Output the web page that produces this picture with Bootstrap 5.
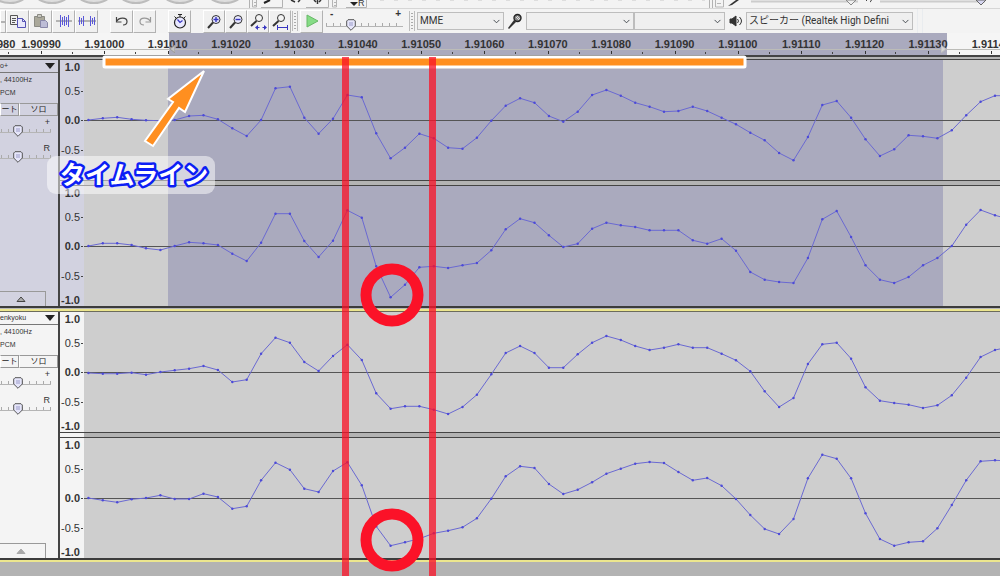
<!DOCTYPE html>
<html lang="ja">
<head>
<meta charset="utf-8">
<meta name="viewport" content="width=device-width, initial-scale=1">
<title>Audio editor</title>
<link href="https://cdn.jsdelivr.net/npm/bootstrap@5.3.0/dist/css/bootstrap.min.css" rel="stylesheet">
<style>
  :root { --sel: #aaaabe; --face: #f3f3f3; --picked: #d2d2e0; }
  body { background: #b3b3b3; color: #333; font-family: "Liberation Sans", "Noto Sans CJK JP", sans-serif; font-size: 11px; line-height: 12px; overflow: hidden; min-height: 100vh; }
  svg { display: block; }
  .top-strip { height: 8px; background: var(--face); }
  .tool-strip { height: 25px; background: var(--face); border-top: 1px solid #d6d6d6; }
  .tool { width: 23px; height: 23px; padding: 0; border: 1px solid; border-color: #fff #b2b2b2 #b2b2b2 #fff; border-radius: 0; background: #f0f0f0; display: flex; align-items: center; justify-content: center; flex: none; }
  .tool-cut { width: 6px; }
  .tool-zoom { width: 22px; }
  .grip { width: 6px; height: 20px; margin: 0 2px 0 1px; flex: none; border: 1px solid #bdbdbd; border-width: 0 1px; background: repeating-linear-gradient(#f3f3f3 0 2px, #aaa 2px 3px); background-clip: content-box; padding: 0 1px; }
  .device { height: 18px; border: 1px solid #bdbdbd; border-radius: 0; padding: 0 14px 0 2px; background-color: #efefef; background-size: 9px 7px; background-position: right 2px center; font: 10px/16px Roboto, "Noto Sans CJK JP", sans-serif; color: #333; flex: none; }
  .device-host { width: 87px; }
  .device-in { width: 108px; }
  .device-channel { width: 91px; }
  .device-out { width: 167px; }
  input[type=range] { appearance: none; -webkit-appearance: none; height: 14px; margin: 0; padding: 0; background: linear-gradient(#b5b5b5, #b5b5b5) 0 8px / 100% 1px no-repeat, repeating-linear-gradient(90deg, #aaa 0 1px, transparent 1px 7px) 0 5px / 100% 3px no-repeat; }
  input[type=range]::-webkit-slider-thumb { -webkit-appearance: none; width: 10px; height: 12px; background: url("data:image/svg+xml,%3Csvg xmlns='http://www.w3.org/2000/svg' viewBox='0 0 10 12'%3E%3Cpath d='M2 .7h6L9.3 2v5L5 11.3.7 7V2z' fill='%23e6e6fa' stroke='%23555'/%3E%3Cpath d='M3 4h4M3 6h4' stroke='%239a9ac8'/%3E%3C/svg%3E") center / 10px 12px no-repeat; }
  .gain { width: 82px; padding-left: 3px; }
  .gain input { width: 77px; }
  .sign { font-size: 10px; line-height: 8px; font-weight: bold; }

  .timeline { height: 22px; background: #f5f5f5; overflow: hidden; }
  .timeline .picked { position: absolute; left: 16.9%; right: 5.3%; top: 0; bottom: 0; background: var(--sel); }
  .marks { margin: 0 -23px 0 -54px; display: grid; grid-template-columns: repeat(17, 1fr); position: relative; height: 22px; padding-top: 5px; }
  .marks span { text-align: center; font-weight: bold; height: 16px; position: relative; }
  .marks span:first-child { text-align: right; margin-right: -6px; }
  .marks span::before { content: ""; position: absolute; left: 50%; bottom: 0; width: 1px; height: 3px; background: #333; }
  .marks span::after { content: ""; position: absolute; right: 0; bottom: 0; width: 1px; height: 2px; background: #444; }
  .marks span:first-child::after { right: 6px; }
  .baseline { position: absolute; left: 0; right: 0; top: 16px; height: 1px; background: #bcbcb8; }
  .edge { position: absolute; top: 12px; }
  .edge-start { left: 17%; }
  .edge-end { right: 5.4%; }
  .divider { height: 5px; border: solid #444; border-width: 2px 0 1px; background: #b5b5b5; }

  .track-panel { width: 60px; border-right: 2px solid #444; flex: none; overflow: hidden; background: var(--track); }
  .is-picked { --track: var(--picked); }
  .is-plain { --track: #f4f4f4; }
  .track-name { height: 13px; border-bottom: 1px solid #777; font-size: 7px; padding-right: 3px; }
  .track-info { height: 13px; font-size: 7px; line-height: 13px; white-space: nowrap; }
  .mini { height: 13px; border: 1px solid #999; border-left-color: #fff; border-radius: 0; background: transparent; font-size: 8px; line-height: 8px; padding: 0; color: #222; overflow: hidden; }
  .mini-cut { width: 19px; }
  .track-panel label { height: 26px; font-size: 9px; line-height: 9px; }
  .track-panel label b { position: absolute; right: 8px; top: -2px; font-weight: normal; }
  .track-panel input { width: 71px; margin: 4px 0 0 -20px; }
  .fold { width: 46px; height: 15px; padding: 0; border: 1px solid #999; border-left: 0; border-bottom: 0; border-radius: 0; background: transparent; }
  .scale { width: 24px; flex: none; background: var(--track); display: grid; grid-template-rows: 14px 34px 24px 36px 12px; }
  .scale span { display: flex; align-items: center; justify-content: flex-end; padding-right: 1px; }
  .scale span::after { content: ""; width: 2px; height: 1px; background: #444; margin-left: 1px; }
  .scale .end::after { visibility: hidden; }
  .plot { flex: 1 1 0; min-width: 0; height: 120px; background: #cecece; position: relative; }
  .is-picked .plot::before { content: ""; position: absolute; top: 0; bottom: 0; left: 9.2%; right: 6.2%; background: var(--sel); }
  .plot svg { position: relative; width: 100%; height: 120px; }
  .between { height: 6px; border: 1px solid #444; border-width: 1px 0; background: #b3b3b3; }
  .between::before { content: ""; display: block; width: 24px; height: 4px; background: var(--track); }
  .track-end { height: 6px; border-top: 2px solid #3c3c3c; border-bottom: 1px solid #6c6c5c; background: linear-gradient(#b8b8b8 1px, #ece68e 1px); }
  .track-end.last { height: 4px; border-bottom: 0; background: #ece68e; }
  .notes { position: absolute; inset: 0; width: 100%; height: 100%; pointer-events: none; }
  .notes text { font: bold 25px "Noto Sans CJK JP", sans-serif; }
</style>
</head>
<body class="position-relative">

<div class="top-strip">
  <svg width="1000" height="8" aria-hidden="true">
    <g fill="#dedede" stroke="#bcbcbc" stroke-width="2">
      <ellipse cx="10" cy="-7" rx="17" ry="10"/><ellipse cx="52" cy="-7" rx="17" ry="10"/><ellipse cx="94" cy="-7" rx="17" ry="10"/><ellipse cx="136" cy="-7" rx="17" ry="10"/><ellipse cx="180" cy="-7" rx="17" ry="10"/><ellipse cx="225" cy="-7" rx="17" ry="10"/>
    </g>
    <path d="M249.500 0V8M261 7.500H282.500V0M306 7.500H328.500V0M346 7.500H366.500V0M709.500 0V8M712.500 0V8" fill="none" stroke="#b2b2b2"/>
    <path d="M252.500 0V7H256.500V0M332.500 0V7H336.500V0M715.500 0V7H723.500V0M254 2.500h2M254 5.500h2M334 2.500h2M334 5.500h2M717 3.500h4" fill="none" stroke="#b5b5b5"/>
    <path d="M264 3 270 0" stroke="#222" stroke-width="2"/><path d="M291 0l4 2M300 0l-2 2M317.500 0V4M314 0l2 2M321 0l-2 2" stroke="#333" stroke-width="1.500"/>
    <path d="M350 2h8l-4 4z" fill="#222"/>
    <path d="M728 6l8-6h3l-7 5z" fill="#333"/>
    <path d="M380 .5H705" stroke="#ddd" stroke-dasharray="4 10"/>
    <path d="M751 1.500H858M880 1.500H985" stroke="#ccc" stroke-width="2"/>
    <path d="M846 0l5 5 5-5z" fill="#eee" stroke="#888"/><path d="M976 0l5 5 5-5z" fill="#d6d6f0" stroke="#666"/>
    <path d="M866 0l1 1M870 2q2-1 1-2" stroke="#444" fill="none"/>
    <text x="358" y="6" font-size="9" fill="#333">R</text>
  </svg>
</div>

<div class="tool-strip d-flex align-items-center overflow-hidden">
  <button class="btn tool tool-cut" aria-label="切り取り"><svg width="4" height="16"><path d="M0 9h4" stroke="#777"/></svg></button>
  <button class="btn tool" aria-label="コピー"><svg width="18" height="16" fill="none" stroke="#555"><path d="M1.500 2.500h7v9h-7zM3 5.500h4M3 7.500h4M3 9.500h3"/><path d="M8.500 5.500h5l3 3v6h-8z" fill="#e8e8fb" stroke="#5553b5"/><path d="M13.500 5.500v3h3" stroke="#5553b5"/></svg></button>
  <button class="btn tool" aria-label="貼り付け"><svg width="18" height="16" fill="#aaa89a" stroke="#8b8b84"><path d="M2.500 3.500h10v10h-10z"/><path d="M5.500 1.500h4v3h-4z" fill="#c8c8c0"/><path d="M8.500 7.500h5l2 2v5h-7z" fill="#bdbdd6" stroke="#8988a8"/></svg></button>
  <button class="btn tool" aria-label="トリム"><svg width="18" height="16" fill="none" stroke="#5a58d8"><path d="M1 8h16" stroke="#777"/><path d="M5.500 2v12M7.500 4v8M9.500 3v10M11.500 4v8M13.500 2v12"/></svg></button>
  <button class="btn tool me-2" aria-label="無音化"><svg width="18" height="16" fill="none" stroke="#5a58d8"><path d="M0 8h18" stroke="#777"/><path d="M1.500 4v8M3.500 5v6M5.500 3v10M12.500 3v10M14.500 5v6M16.500 4v8"/></svg></button>
  <button class="btn tool ms-1" aria-label="元に戻す"><svg width="16" height="16" fill="none" stroke="#444" stroke-width="1.200"><path d="M3 8C5 4 13 4 13 8.500 13 11 11 12 9 12"/><path d="M2.500 4v5h5"/></svg></button>
  <button class="btn tool me-2" aria-label="やり直し"><svg width="16" height="16" fill="none" stroke="#999" stroke-width="1.200"><path d="M13 8C11 4 3 4 3 8.500 3 11 5 12 7 12"/><path d="M13.500 4v5h-5"/></svg></button>
  <button class="btn tool ms-1 me-2" aria-label="同期ロック"><svg width="16" height="17" fill="none" stroke="#222"><circle cx="8" cy="9.500" r="5.500" fill="#e9e9ff" stroke-width="1.200"/><path d="M6 1.500h4M8 2v2M2.500 3.500 4 5M13.500 3.500 12 5"/><path d="M5.500 6.500 8 9.500l2.500-2" stroke="#3735c0" stroke-width="1.200"/></svg></button>
  <button class="btn tool tool-zoom ms-1" aria-label="拡大"><svg width="17" height="17" fill="none" stroke="#333"><circle cx="10" cy="6.500" r="4" fill="#e9e9ff"/><path d="M7 9.500 2 15" stroke-width="2"/><path d="M7.500 6.500h5M10 4v5" stroke="#3735c0" stroke-width="1.400"/></svg></button>
  <button class="btn tool tool-zoom" aria-label="縮小"><svg width="17" height="17" fill="none" stroke="#333"><circle cx="10" cy="6.500" r="4" fill="#e9e9ff"/><path d="M7 9.500 2 15" stroke-width="2"/><path d="M7.500 6.500h5" stroke="#3735c0" stroke-width="1.400"/></svg></button>
  <button class="btn tool tool-zoom" aria-label="選択範囲に合わせる"><svg width="18" height="17" fill="none" stroke="#333"><circle cx="10" cy="5" r="3.500" fill="#f4f4f4"/><path d="M7.500 8 2 13" stroke-width="2"/><path d="M7.500 14.500h3M13.500 14.500h3" stroke="#3735c0"/><path d="M9 12v5l-3-2.500zM15 12v5l3-2.500z" fill="#3735c0" stroke="none"/></svg></button>
  <button class="btn tool tool-zoom" aria-label="全体に合わせる"><svg width="18" height="17" fill="none" stroke="#333"><circle cx="10" cy="5" r="3.500" fill="#f4f4f4"/><path d="M7.500 8 2 13" stroke-width="2"/><path d="M6.500 14.500h10M6.500 12v5M16.500 12v5" stroke="#3735c0"/></svg></button>
  <span class="grip"></span>
  <button class="btn tool" aria-label="再生"><svg width="16" height="16"><path d="M3 2v12l11-6z" fill="#86dc86" stroke="#68b968"/></svg></button>
  <label class="gain flex-shrink-0"><span class="d-flex justify-content-between px-1 sign"><span>-</span><span>+</span></span><input type="range" class="d-block" value="30" aria-label="再生速度"></label>
  <span class="grip ms-1"></span>
  <select class="form-select device device-host" aria-label="ホスト"><option>MME</option></select>
  <svg class="flex-shrink-0 mx-1" width="14" height="16" fill="#333" aria-hidden="true"><path d="M0 15 6 7l2 2-7 7z"/><circle cx="9.500" cy="5" r="3.500" fill="#888" stroke="#222" stroke-width="1.400"/><path d="M8 4l3 3M9 3l3 3" stroke="#ddd"/></svg>
  <select class="form-select device device-in" aria-label="録音デバイス"><option></option></select>
  <select class="form-select device device-channel" aria-label="録音チャンネル"><option></option></select>
  <svg class="flex-shrink-0 mx-1" width="13" height="14" fill="none" stroke="#333" aria-hidden="true"><path d="M1 5h2l4-3v10L3 9H1z" fill="#333"/><path d="M8.500 5q2 2 0 4M10.500 3q4 4 0 8"/></svg>
  <select class="form-select device device-out" aria-label="再生デバイス"><option>スピーカー (Realtek High Defini</option></select>
  <span class="border-start border-end border-secondary-subtle align-self-stretch ms-1 pe-1"></span>
</div>

<div class="timeline position-relative">
  <div class="picked"></div>
  <div class="baseline"></div>
  <div class="marks" id="marks"></div>
  <svg class="edge edge-start" width="5" height="8"><path d="M5 0v8L0 4z" fill="#c4c4c4" stroke="#999"/></svg>
  <svg class="edge edge-end" width="5" height="8"><path d="M0 0v8l5-4z" fill="#d5d5d5" stroke="#bbb"/></svg>
</div>
<div class="divider"></div>

<main id="tracks"></main>

<svg class="notes" aria-label="注釈">
  <rect x="104" y="57" width="641" height="10" rx="1" fill="#ff8f20" stroke="#fff" stroke-width="3"/>
  <path d="M204 71 185 112 179 108 153 146 145 141 173 102 168 99z" fill="#ff8f20" stroke="#fff" stroke-width="2"/>
  <rect x="47" y="156" width="168" height="38" rx="9" fill="#fff" fill-opacity=".5"/>
  <text x="60" y="184" fill="#fff" stroke="#0c1ef5" stroke-width="5" stroke-linejoin="round" paint-order="stroke">タイムライン</text>
  <path d="M345.500 57V2000M432.500 57V2000" stroke="#fa1228" stroke-opacity=".76" stroke-width="7"/>
  <g fill="none" stroke="#fb1228" stroke-width="11"><circle cx="392" cy="295" r="26"/><circle cx="392" cy="540" r="26"/></g>
</svg>

<script src="https://cdn.jsdelivr.net/npm/bootstrap@5.3.0/dist/js/bootstrap.bundle.min.js"></script>
<script>
  // Time ruler labels, in seconds.
  for (let i = 0; i < 17; i++) {
    const s = document.createElement('span');
    s.textContent = ((190980 + i * 10) / 100000).toFixed(5);
    document.getElementById('marks').append(s);
  }

  // Sample values; 180 is full scale.
  const tracks = [
    { name: 'o+', state: 'is-picked', channels: [
      [0,5,8,2,-1,-2,0,12,14,2,-25,-48,0,95,100,7,-41,4,75,68,-40,-115,-83,-41,-55,-83,-86,-53,-2,43,65,52,12,-5,25,75,90,73,52,40,25,27,40,27,7,-13,-38,-61,-99,-121,-51,45,57,7,-58,-108,-88,-46,-49,-55,-31,14,55,73,73],
      [0,8,8,3,-7,-12,0,11,8,3,-23,-45,10,97,97,15,-33,16,107,85,-61,-154,-116,-64,-61,-66,-58,-51,-13,50,82,70,32,-3,7,52,70,62,57,47,47,47,17,7,22,-14,-78,-101,-108,-111,-36,80,105,27,-58,-101,-111,-93,-58,-36,0,64,108,92,80] ] },
    { name: 'enkyoku', state: 'is-plain', channels: [
      [-3,-5,-5,-2,-8,0,5,10,18,6,-30,-23,55,103,88,30,3,48,82,36,-64,-110,-103,-103,-113,-126,-105,-68,-7,57,78,57,13,13,53,88,108,96,78,66,73,83,73,73,55,35,2,-58,-105,-78,24,83,88,40,-46,-86,-93,-98,-108,-100,-70,-17,45,66,75],
      [0,-7,-13,-4,0,8,-3,-3,13,3,-32,-25,53,106,85,28,18,81,107,38,-85,-143,-133,-122,-106,-98,-88,-61,-2,65,95,90,42,12,25,47,73,88,103,108,105,78,53,60,37,-3,-51,-93,-108,-63,59,130,118,59,-46,-123,-143,-133,-130,-91,-21,53,110,113,111] ] }
  ];

  function plot(samples) {
    const pts = samples.map((v, i) => [(4.4 + i * 14.39).toFixed(1), (60 - v / 3).toFixed(1)]);
    return `<svg viewBox="0 0 916 120" preserveAspectRatio="none"><path d="M0 60.500H916" stroke="#555"/>
      <polyline points="${pts.join(' ')}" fill="none" stroke="#6a69d2"/>
      ${pts.map(p => `<circle cx="${p[0]}" cy="${p[1]}" r="1.200" fill="#4c4ad8"/>`).join('')}</svg>`;
  }
  const scale = `<div class="scale"><span class="end"><b>1.0</b></span><span>0.5</span><span><b>0.0</b></span><span>-0.5</span><span class="end"><b>-1.0</b></span></div>`;
  const row = c => `<div class="d-flex">${scale}<div class="plot">${plot(c)}</div></div>`;

  document.getElementById('tracks').innerHTML = tracks.map((t, n) => `
    <section class="d-flex ${t.state}">
      <div class="track-panel d-flex flex-column">
        <div class="track-name d-flex justify-content-between align-items-center"><span>${t.name}</span>
          <svg width="10" height="6"><path d="M0 0h10L5 6z" fill="#222"/></svg></div>
        <div class="track-info">, 44100Hz</div>
        <div class="track-info">PCM</div>
        <div class="d-flex mt-1 mb-1"><button class="btn mini mini-cut">ート</button><button class="btn mini flex-grow-1">ソロ</button></div>
        <label class="position-relative"><b>+</b><input type="range" value="54" aria-label="音量"></label>
        <label class="position-relative"><b>R</b><input type="range" value="54" aria-label="パン"></label>
        <button class="btn fold mt-auto d-flex justify-content-center align-items-center" aria-label="折りたたむ"><svg class="me-1" width="10" height="6"><path d="M1 5.500h8L5 1z" fill="#aaa" stroke="${n ? '#aaa' : '#444'}"/></svg></button>
      </div>
      <div class="flex-grow-1">${row(t.channels[0])}<div class="between"></div>${row(t.channels[1])}</div>
    </section>
    <div class="track-end ${n ? 'last' : ''}"></div>`).join('');
</script>
</body>
</html>
